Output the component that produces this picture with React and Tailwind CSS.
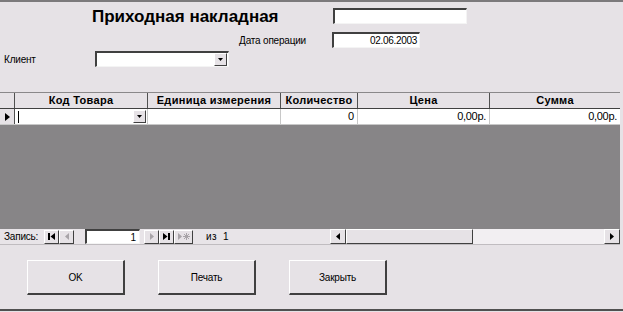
import React from "react";

const font = { fontFamily: '"Liberation Sans", Arial, sans-serif' };

const sunken =
  "bg-white border-t-2 border-l-2 border-t-[#404040] border-l-[#404040] border-b border-r border-b-[#f4f4f4] border-r-[#f4f4f4]";
const raised =
  "bg-[#e6e2e6] border border-t-white border-l-white border-b-[#404040] border-r-[#404040]";

function DropArrow() {
  return (
    <div className={`w-[13px] h-[13px] flex items-center justify-center ${raised}`}>
      <svg width="5" height="3" viewBox="0 0 5 3">
        <path d="M0 0h5L2.5 3z" fill="#000" />
      </svg>
    </div>
  );
}

function NavBtn({ children, disabled }) {
  return (
    <div
      className={`w-[15px] h-[14px] flex items-center justify-center ${raised} ${
        disabled ? "text-[#a8a4a8]" : "text-black"
      }`}
    >
      {children}
    </div>
  );
}

const columns = [
  { title: "Код Товара", w: "w-[133px]" },
  { title: "Единица измерения", w: "w-[133px]" },
  { title: "Количество", w: "w-[77px]" },
  { title: "Цена", w: "w-[132px]" },
  { title: "Сумма", w: "flex-1" },
];

export default function App() {
  return (
    <div
      className="w-[623px] h-[312px] bg-[#e6e2e6] border-t-2 border-[#7c7a7c] overflow-hidden flex flex-col text-[10px] text-black"
      style={font}
    >
      {/* header fields */}
      <div className="flex items-center h-[14px] mt-[7px]">
        <div className="ml-[92px] w-[241px] text-[17px] font-bold leading-none">
          Приходная накладная
        </div>
        <div className={`w-[134px] h-[16px] ${sunken}`} />
      </div>
      <div className="flex items-center mt-[9px] h-[16px]">
        <div className="w-[306px] text-right text-[10px] tracking-[-0.2px]">Дата операции</div>
        <div className={`ml-[26px] w-[88px] h-[16px] ${sunken} flex items-center justify-end pr-[2px] text-[10px] leading-none tracking-[-0.3px]`}>
          02.06.2003
        </div>
      </div>
      <div className="flex items-center mt-[3px] h-[16px]">
        <div className="w-[95px] pl-[4px] tracking-[-0.2px]">Клиент</div>
        <div className={`w-[134px] h-[16px] ${sunken} flex items-center justify-end pr-[1px]`}>
          <DropArrow />
        </div>
      </div>

      {/* datasheet */}
      <div className="mt-[25px] mr-[3px] flex flex-col border-t border-[#8a888a]">
        <div className="flex h-[16px] bg-[#e6e2e6] border-b border-[#404040]">
          <div className="w-[15px] border-r border-[#505050]" />
          {columns.map((c, i) => (
            <div
              key={c.title}
              className={`${c.w} flex items-center justify-center text-[11px] font-bold leading-none tracking-[0.3px] ${
                i < columns.length - 1 ? "border-r border-[#505050]" : ""
              }`}
            >
              {c.title}
            </div>
          ))}
        </div>
        <div className="flex h-[16px] bg-white border-b border-[#c8c8c8]">
          <div className="w-[15px] bg-[#e6e2e6] border-r border-[#505050] flex items-center justify-center">
            <svg width="5" height="8" viewBox="0 0 5 8">
              <path d="M0 0l5 4-5 4z" fill="#000" />
            </svg>
          </div>
          <div className="w-[133px] border-r border-[#c8c8c8] flex items-center pl-[3px] pr-[1px]">
            <div className="w-[1px] h-[12px] bg-black" />
            <div className="flex-1" />
            <DropArrow />
          </div>
          <div className="w-[133px] border-r border-[#c8c8c8]" />
          <div className="w-[77px] border-r border-[#c8c8c8] flex items-center justify-end pr-[3px] text-[11px]">
            0
          </div>
          <div className="w-[132px] border-r border-[#c8c8c8] flex items-center justify-end pr-[3px] text-[11px] tracking-[-0.3px]">
            0,00р.
          </div>
          <div className="flex-1 flex items-center justify-end pr-[3px] text-[11px] tracking-[-0.3px]">
            0,00р.
          </div>
        </div>
        <div className="h-[104px] bg-[#878587]" />

        {/* navigation bar */}
        <div className="flex items-center h-[16px] bg-[#e8e4e8] border-b border-[#c0bcc0]">
          <div className="w-[44px] pl-[4px] text-[10px] tracking-[-0.2px]">Запись:</div>
          <NavBtn>
            <svg width="7" height="7" viewBox="0 0 7 7">
              <path d="M0 0h2v7H0zM7 0v7L2.5 3.5z" fill="currentColor" />
            </svg>
          </NavBtn>
          <NavBtn disabled>
            <svg width="4" height="7" viewBox="0 0 4 7">
              <path d="M4 0v7L0 3.5z" fill="currentColor" />
            </svg>
          </NavBtn>
          <div className={`ml-[11px] w-[55px] h-[15px] ${sunken} flex items-center justify-end pr-[3px] text-[10px]`}>
            1
          </div>
          <div className="ml-[4px] flex">
            <NavBtn disabled>
              <svg width="4" height="7" viewBox="0 0 4 7">
                <path d="M0 0v7l4-3.5z" fill="currentColor" />
              </svg>
            </NavBtn>
            <NavBtn>
              <svg width="7" height="7" viewBox="0 0 7 7">
                <path d="M0 0v7l4.5-3.5zM5 0h2v7H5z" fill="currentColor" />
              </svg>
            </NavBtn>
            <div className={`w-[19px] h-[14px] flex items-center justify-center ${raised} text-[#a8a4a8]`}>
              <svg width="12" height="7" viewBox="0 0 12 7">
                <path d="M0 0v7l4-3.5z" fill="currentColor" />
                <path d="M8.5 0v7M5 3.5h7M6 1l5 5M11 1l-5 5" stroke="currentColor" strokeWidth="1" />
              </svg>
            </div>
          </div>
          <div className="ml-[13px] w-[124px] text-[10px] tracking-[0.3px]">из&nbsp; 1</div>
          <div className="flex-1 h-[15px] flex bg-[#f2eff2]">
            <div className={`w-[16px] h-[15px] flex items-center justify-center ${raised}`}>
              <svg width="4" height="7" viewBox="0 0 4 7">
                <path d="M4 0v7L0 3.5z" fill="#000" />
              </svg>
            </div>
            <div className={`w-[127px] h-[15px] ${raised}`} />
            <div className="flex-1" />
            <div className={`w-[16px] h-[15px] flex items-center justify-center ${raised}`}>
              <svg width="4" height="7" viewBox="0 0 4 7">
                <path d="M0 0v7l4-3.5z" fill="#000" />
              </svg>
            </div>
          </div>
        </div>
      </div>

      {/* buttons */}
      <div className="flex mt-[15px] ml-[27px] gap-[33px]">
        {["OK", "Печать", "Закрыть"].map((t) => (
          <div
            key={t}
            className="w-[98px] h-[35px] flex items-center justify-center bg-[#e6e2e6] border border-t-white border-l-white border-b-2 border-r-2 border-b-[#404040] border-r-[#404040] text-[10px] tracking-[-0.2px]"
          >
            {t}
          </div>
        ))}
      </div>
      <div className="mt-auto h-[3px] border-t-2 border-[#505050]" />
    </div>
  );
}
